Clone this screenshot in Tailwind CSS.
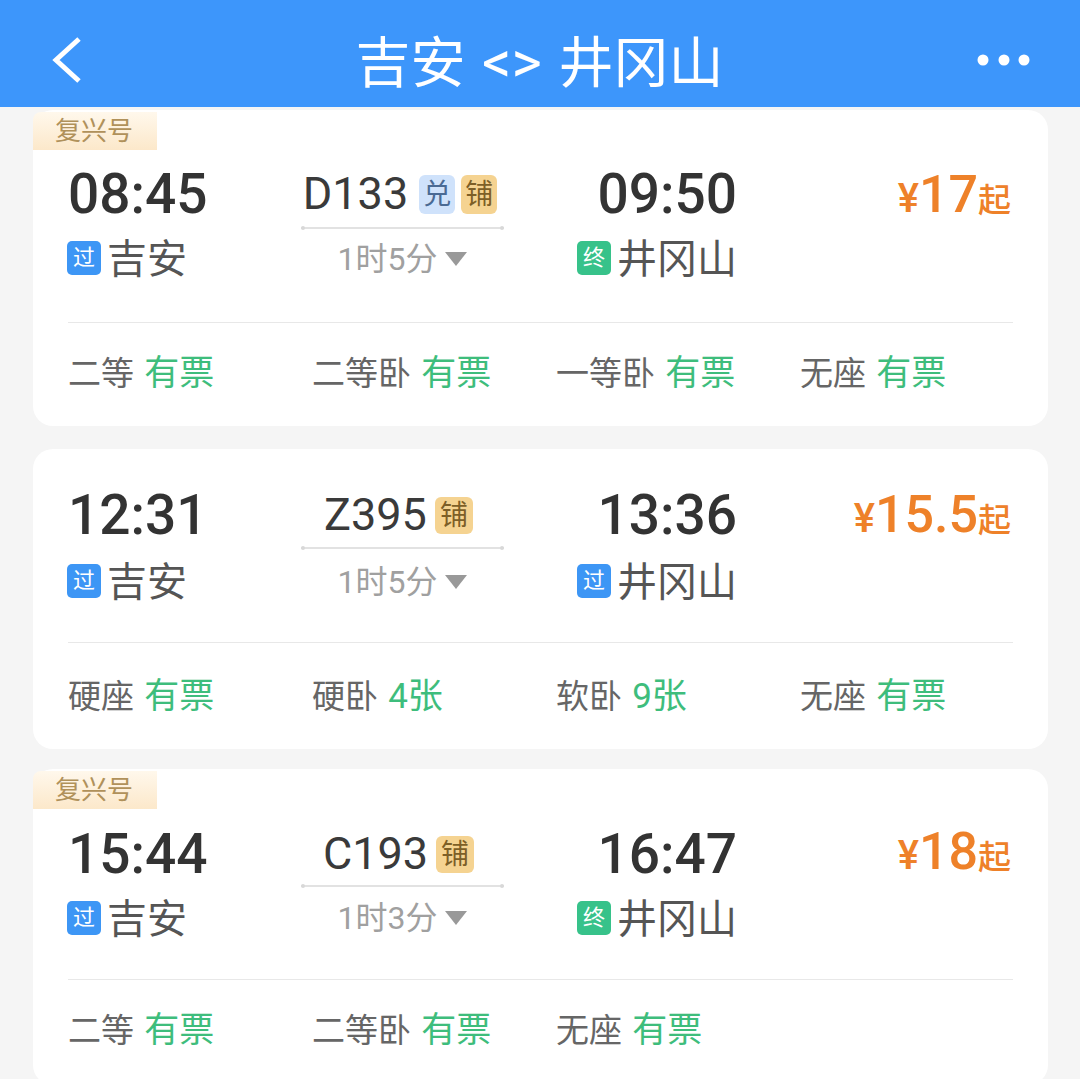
<!DOCTYPE html>
<html lang="zh-CN">
<head>
    <meta charset="UTF-8">
    <meta name="viewport" content="width=device-width, initial-scale=1.0">
    <script src="https://cdn.jsdelivr.net/npm/@tailwindcss/browser@4"></script>
    <title>吉安 - 井冈山</title>
</head>
<body class="h-[1079px] overflow-hidden bg-[#f5f5f5] [font-family:Roboto,'Noto_Sans_CJK_SC',sans-serif]">
    <!-- Header -->
    <header class="h-[107px] bg-[#3d96fb] grid grid-cols-[58px_1fr_58px] items-center pt-[13px] pl-[50px] pr-[45px] text-white">
        <svg class="w-[32px] h-[48px]" viewBox="0 0 32 48" fill="none" stroke="#fff" stroke-width="5"><path d="M29 3 L6 24 L29 45"/></svg>
        <h1 class="text-[55px] leading-[70px] pt-[5px] pr-[6px] text-center whitespace-nowrap">吉安 <span class="mx-[3px] text-[58px]">&lt;&gt;</span> 井冈山</h1>
        <svg class="w-[58px] h-[12px]" viewBox="0 0 58 12" fill="#fff"><circle cx="6" cy="6" r="5.5"/><circle cx="27" cy="6" r="5.5"/><circle cx="47" cy="6" r="5.5"/></svg>
    </header>

    <main class="pt-[3px] pl-[33px] w-[1048px]">
        <!-- D133 -->
        <section class="relative bg-white rounded-[20px] px-[35px] pt-[54px] pb-[32px]">
            <div class="absolute left-0 top-[2px] w-[124px] h-[38px] bg-gradient-to-b from-[#fff8ec] to-[#fce8ca] rounded-tl-[8px] pl-[22px] text-[26px] leading-[38px] text-[#b0915a]">复兴号</div>
            <div class="flex">
                <div class="w-[233px]">
                    <div class="text-[55px] leading-[60px] text-[#333] font-medium">08:45</div>
                    <div class="flex items-center gap-[6px] mt-[14px] h-[40px]">
                        <span class="w-[34px] h-[34px] -ml-[1px] rounded-[5px] bg-[#3d96f5] text-white text-[22px] leading-[34px] text-center">过</span>
                        <span class="text-[40px] leading-[40px] pt-[4px] text-[#555]">吉安</span>
                    </div>
                </div>
                <div class="w-[203px] flex flex-col items-center">
                    <div class="flex items-center h-[60px] text-[#3a3a3a] text-[45px] pr-[5px]">
                        <span>D133</span>
                        <span class="ml-[11px] w-[36px] h-[39px] rounded-[6px] bg-[#cfe2fb] text-[#4a6a94] text-[28px] leading-[39px] text-center">兑</span>
                        <span class="ml-[6px] w-[36px] h-[39px] rounded-[6px] bg-[#f5d391] text-[#7d5f27] text-[28px] leading-[39px] text-center">铺</span>
                    </div>
                    <div class="relative w-full h-[2px] bg-[#e2e2e2] mt-[3px]">
                        <span class="absolute left-0 -top-[1px] w-[4px] h-[4px] rounded-full bg-[#d8d8d8]"></span>
                        <span class="absolute right-0 -top-[1px] w-[4px] h-[4px] rounded-full bg-[#d8d8d8]"></span>
                    </div>
                    <div class="flex items-center gap-[8px] mt-[10px] text-[32px] leading-[40px] text-[#a0a0a0]">
                        <span>1时5分</span>
                        <svg class="w-[22px] h-[14px]" viewBox="0 0 22 14" fill="#999"><path d="M0 0H22L11 14Z"/></svg>
                    </div>
                </div>
                <div class="w-[233px] flex flex-col items-end">
                    <div class="text-[55px] leading-[60px] text-[#333] font-medium">09:50</div>
                    <div class="flex items-center gap-[6px] mt-[14px] h-[40px]">
                        <span class="w-[34px] h-[34px] rounded-[5px] bg-[#37c28a] text-white text-[22px] leading-[34px] text-center">终</span>
                        <span class="text-[40px] leading-[40px] pt-[4px] text-[#555]">井冈山</span>
                    </div>
                </div>
                <div class="flex-1 flex items-baseline justify-end h-[60px] -mt-[8px] pr-[2px] text-[#ee8129]">
                    <span class="text-[40px] font-medium">¥</span><span class="text-[52px] font-medium">17</span><span class="text-[33px] font-medium">起</span>
                </div>
            </div>
            <div class="h-[1px] bg-[#e8e8e8] mt-[43px]"></div>
            <div class="grid grid-cols-[repeat(4,244px)] mt-[31px] text-[33px] leading-[40px] text-[#666]">
                <div>二等 <span class="ml-[2px] text-[35px] text-[#3ebd7c]">有票</span></div>
                <div>二等卧 <span class="ml-[2px] text-[35px] text-[#3ebd7c]">有票</span></div>
                <div>一等卧 <span class="ml-[2px] text-[35px] text-[#3ebd7c]">有票</span></div>
                <div>无座 <span class="ml-[2px] text-[35px] text-[#3ebd7c]">有票</span></div>
            </div>
        </section>

        <!-- Z395 -->
        <section class="relative bg-white rounded-[20px] px-[35px] pt-[36px] pb-[32px] mt-[23px]">
            <div class="flex">
                <div class="w-[233px]">
                    <div class="text-[55px] leading-[60px] text-[#333] font-medium">12:31</div>
                    <div class="flex items-center gap-[6px] mt-[16px] h-[40px]">
                        <span class="w-[34px] h-[34px] -ml-[1px] rounded-[5px] bg-[#3d96f5] text-white text-[22px] leading-[34px] text-center">过</span>
                        <span class="text-[40px] leading-[40px] pt-[4px] text-[#555]">吉安</span>
                    </div>
                </div>
                <div class="w-[203px] flex flex-col items-center">
                    <div class="flex items-center h-[60px] text-[#3a3a3a] text-[45px] pr-[8px]">
                        <span>Z395</span>
                        <span class="ml-[8px] w-[38px] h-[37px] rounded-[6px] bg-[#f5d391] text-[#7d5f27] text-[28px] leading-[37px] text-center">铺</span>
                    </div>
                    <div class="relative w-full h-[2px] bg-[#e2e2e2] mt-[2px]">
                        <span class="absolute left-0 -top-[1px] w-[4px] h-[4px] rounded-full bg-[#d8d8d8]"></span>
                        <span class="absolute right-0 -top-[1px] w-[4px] h-[4px] rounded-full bg-[#d8d8d8]"></span>
                    </div>
                    <div class="flex items-center gap-[8px] mt-[13px] text-[32px] leading-[40px] text-[#a0a0a0]">
                        <span>1时5分</span>
                        <svg class="w-[22px] h-[14px]" viewBox="0 0 22 14" fill="#999"><path d="M0 0H22L11 14Z"/></svg>
                    </div>
                </div>
                <div class="w-[233px] flex flex-col items-end">
                    <div class="text-[55px] leading-[60px] text-[#333] font-medium">13:36</div>
                    <div class="flex items-center gap-[6px] mt-[16px] h-[40px]">
                        <span class="w-[34px] h-[34px] rounded-[5px] bg-[#3d96f5] text-white text-[22px] leading-[34px] text-center">过</span>
                        <span class="text-[40px] leading-[40px] pt-[4px] text-[#555]">井冈山</span>
                    </div>
                </div>
                <div class="flex-1 flex items-baseline justify-end h-[60px] -mt-[9px] pr-[2px] text-[#ee8129]">
                    <span class="text-[40px] font-medium">¥</span><span class="text-[52px] font-medium">15.5</span><span class="text-[33px] font-medium">起</span>
                </div>
            </div>
            <div class="h-[1px] bg-[#e8e8e8] mt-[40px]"></div>
            <div class="grid grid-cols-[repeat(4,244px)] mt-[34px] text-[33px] leading-[40px] text-[#666]">
                <div>硬座 <span class="ml-[2px] text-[35px] text-[#3ebd7c]">有票</span></div>
                <div>硬卧 <span class="ml-[2px] text-[35px] text-[#3ebd7c]">4张</span></div>
                <div>软卧 <span class="ml-[2px] text-[35px] text-[#3ebd7c]">9张</span></div>
                <div>无座 <span class="ml-[2px] text-[35px] text-[#3ebd7c]">有票</span></div>
            </div>
        </section>

        <!-- C193 -->
        <section class="relative bg-white rounded-[20px] px-[35px] pt-[55px] pb-[34px] mt-[20px]">
            <div class="absolute left-0 top-[2px] w-[124px] h-[38px] bg-gradient-to-b from-[#fff8ec] to-[#fce8ca] rounded-tl-[8px] pl-[22px] text-[26px] leading-[38px] text-[#b0915a]">复兴号</div>
            <div class="flex">
                <div class="w-[233px]">
                    <div class="text-[55px] leading-[60px] text-[#333] font-medium">15:44</div>
                    <div class="flex items-center gap-[6px] mt-[14px] h-[40px]">
                        <span class="w-[34px] h-[34px] -ml-[1px] rounded-[5px] bg-[#3d96f5] text-white text-[22px] leading-[34px] text-center">过</span>
                        <span class="text-[40px] leading-[40px] pt-[4px] text-[#555]">吉安</span>
                    </div>
                </div>
                <div class="w-[203px] flex flex-col items-center">
                    <div class="flex items-center h-[60px] text-[#3a3a3a] text-[45px] pr-[8px]">
                        <span>C193</span>
                        <span class="ml-[8px] w-[38px] h-[37px] rounded-[6px] bg-[#f5d391] text-[#7d5f27] text-[28px] leading-[37px] text-center">铺</span>
                    </div>
                    <div class="relative w-full h-[2px] bg-[#e2e2e2] mt-[1px]">
                        <span class="absolute left-0 -top-[1px] w-[4px] h-[4px] rounded-full bg-[#d8d8d8]"></span>
                        <span class="absolute right-0 -top-[1px] w-[4px] h-[4px] rounded-full bg-[#d8d8d8]"></span>
                    </div>
                    <div class="flex items-center gap-[8px] mt-[11px] text-[32px] leading-[40px] text-[#a0a0a0]">
                        <span>1时3分</span>
                        <svg class="w-[22px] h-[14px]" viewBox="0 0 22 14" fill="#999"><path d="M0 0H22L11 14Z"/></svg>
                    </div>
                </div>
                <div class="w-[233px] flex flex-col items-end">
                    <div class="text-[55px] leading-[60px] text-[#333] font-medium">16:47</div>
                    <div class="flex items-center gap-[6px] mt-[14px] h-[40px]">
                        <span class="w-[34px] h-[34px] rounded-[5px] bg-[#37c28a] text-white text-[22px] leading-[34px] text-center">终</span>
                        <span class="text-[40px] leading-[40px] pt-[4px] text-[#555]">井冈山</span>
                    </div>
                </div>
                <div class="flex-1 flex items-baseline justify-end h-[60px] -mt-[11px] pr-[2px] text-[#ee8129]">
                    <span class="text-[40px] font-medium">¥</span><span class="text-[52px] font-medium">18</span><span class="text-[33px] font-medium">起</span>
                </div>
            </div>
            <div class="h-[1px] bg-[#e8e8e8] mt-[41px]"></div>
            <div class="grid grid-cols-[repeat(4,244px)] mt-[31px] text-[33px] leading-[40px] text-[#666]">
                <div>二等 <span class="ml-[2px] text-[35px] text-[#3ebd7c]">有票</span></div>
                <div>二等卧 <span class="ml-[2px] text-[35px] text-[#3ebd7c]">有票</span></div>
                <div>无座 <span class="ml-[2px] text-[35px] text-[#3ebd7c]">有票</span></div>
            </div>
        </section>
    </main>
</body>
</html>
